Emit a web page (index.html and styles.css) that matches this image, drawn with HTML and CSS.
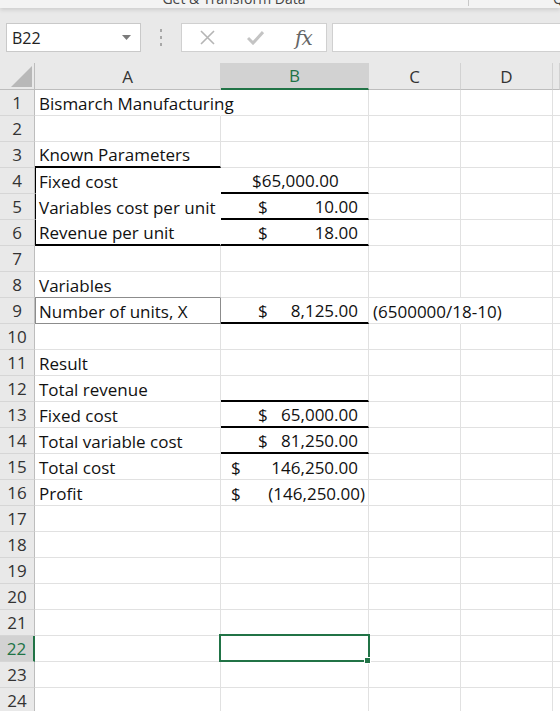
FILE: index.html
```html
<!DOCTYPE html>
<html lang="en">
<head>
    <meta charset="UTF-8">
    <meta name="viewport" content="width=device-width, initial-scale=1.0">
    <title>Break-even - Excel</title>
    <link rel="stylesheet" href="styles.css">
</head>
<body>
    <div class="ribbon">
        <span class="group-label">Get &amp; Transform Data</span>
        <span class="group-sep"></span>
        <span class="next-label">Q</span>
    </div>

    <div class="formula-bar">
        <div class="name-box">
            <span>B22</span>
            <svg width="9" height="5" viewBox="0 0 9 5"><polygon points="0,0 9,0 4.5,5" fill="#7a7a7a"/></svg>
        </div>
        <div class="grip"><i></i><i></i><i></i></div>
        <div class="fx-box">
            <svg class="cancel" width="15" height="15" viewBox="0 0 15 15"><path d="M1 1 L14 14 M14 1 L1 14" stroke="#b5b5b5" stroke-width="1.6"/></svg>
            <svg class="enter" width="17" height="15" viewBox="0 0 17 15"><path d="M1 8 L6 13 L16 2" stroke="#c4c4c4" stroke-width="3" fill="none"/></svg>
            <span class="fx">fx</span>
        </div>
        <div class="formula-input"></div>
    </div>

    <div class="sheet">
        <div class="row head">
            <div class="corner"><svg width="21" height="21" viewBox="0 0 21 21"><polygon points="21,0 21,21 0,21" fill="#b8b8b8"/></svg></div>
            <div class="ch">A</div>
            <div class="ch selected">B</div>
            <div class="ch">C</div>
            <div class="ch">D</div>
            <div class="ch"></div>
        </div>

        <div class="row">
            <div class="rh">1</div>
            <div class="c spill">Bismarch Manufacturing</div>
            <div class="c"></div><div class="c"></div><div class="c"></div><div class="c"></div>
        </div>
        <div class="row">
            <div class="rh">2</div>
            <div class="c"></div><div class="c"></div><div class="c"></div><div class="c"></div><div class="c"></div>
        </div>
        <div class="row">
            <div class="rh">3</div>
            <div class="c thick-bottom">Known Parameters</div>
            <div class="c"></div><div class="c"></div><div class="c"></div><div class="c"></div>
        </div>
        <div class="row">
            <div class="rh">4</div>
            <div class="c boxed-left no-grid">Fixed cost</div>
            <div class="c money thick-bottom">$65,000.00</div>
            <div class="c"></div><div class="c"></div><div class="c"></div>
        </div>
        <div class="row">
            <div class="rh">5</div>
            <div class="c boxed-left no-grid">Variables cost per unit</div>
            <div class="c acct thick-bottom"><span>$</span><span>10.00</span></div>
            <div class="c"></div><div class="c"></div><div class="c"></div>
        </div>
        <div class="row">
            <div class="rh">6</div>
            <div class="c boxed-left no-grid thick-bottom">Revenue per unit</div>
            <div class="c acct thick-bottom"><span>$</span><span>18.00</span></div>
            <div class="c"></div><div class="c"></div><div class="c"></div>
        </div>
        <div class="row">
            <div class="rh">7</div>
            <div class="c"></div><div class="c"></div><div class="c"></div><div class="c"></div><div class="c"></div>
        </div>
        <div class="row">
            <div class="rh">8</div>
            <div class="c box-top">Variables</div>
            <div class="c"></div><div class="c"></div><div class="c"></div><div class="c"></div>
        </div>
        <div class="row">
            <div class="rh">9</div>
            <div class="c boxed">Number of units, X</div>
            <div class="c acct thick-bottom"><span>$</span><span>8,125.00</span></div>
            <div class="c spill">(6500000/18-10)</div>
            <div class="c"></div><div class="c"></div>
        </div>
        <div class="row">
            <div class="rh">10</div>
            <div class="c"></div><div class="c"></div><div class="c"></div><div class="c"></div><div class="c"></div>
        </div>
        <div class="row">
            <div class="rh">11</div>
            <div class="c">Result</div>
            <div class="c"></div><div class="c"></div><div class="c"></div><div class="c"></div>
        </div>
        <div class="row">
            <div class="rh">12</div>
            <div class="c">Total revenue</div>
            <div class="c thick-bottom"></div>
            <div class="c"></div><div class="c"></div><div class="c"></div>
        </div>
        <div class="row">
            <div class="rh">13</div>
            <div class="c">Fixed cost</div>
            <div class="c acct tight thick-bottom"><span>$</span><span>65,000.00</span></div>
            <div class="c"></div><div class="c"></div><div class="c"></div>
        </div>
        <div class="row">
            <div class="rh">14</div>
            <div class="c">Total variable cost</div>
            <div class="c acct tight thick-bottom"><span>$</span><span>81,250.00</span></div>
            <div class="c"></div><div class="c"></div><div class="c"></div>
        </div>
        <div class="row">
            <div class="rh">15</div>
            <div class="c">Total cost</div>
            <div class="c acct wide"><span>$</span><span>146,250.00</span></div>
            <div class="c"></div><div class="c"></div><div class="c"></div>
        </div>
        <div class="row">
            <div class="rh">16</div>
            <div class="c">Profit</div>
            <div class="c acct wide negative"><span>$</span><span>(146,250.00)</span></div>
            <div class="c"></div><div class="c"></div><div class="c"></div>
        </div>
        <div class="row">
            <div class="rh">17</div>
            <div class="c"></div><div class="c"></div><div class="c"></div><div class="c"></div><div class="c"></div>
        </div>
        <div class="row">
            <div class="rh">18</div>
            <div class="c"></div><div class="c"></div><div class="c"></div><div class="c"></div><div class="c"></div>
        </div>
        <div class="row">
            <div class="rh">19</div>
            <div class="c"></div><div class="c"></div><div class="c"></div><div class="c"></div><div class="c"></div>
        </div>
        <div class="row">
            <div class="rh">20</div>
            <div class="c"></div><div class="c"></div><div class="c"></div><div class="c"></div><div class="c"></div>
        </div>
        <div class="row">
            <div class="rh">21</div>
            <div class="c"></div><div class="c"></div><div class="c"></div><div class="c"></div><div class="c"></div>
        </div>
        <div class="row">
            <div class="rh selected">22</div>
            <div class="c"></div>
            <div class="c active"></div>
            <div class="c"></div><div class="c"></div><div class="c"></div>
        </div>
        <div class="row">
            <div class="rh">23</div>
            <div class="c"></div><div class="c"></div><div class="c"></div><div class="c"></div><div class="c"></div>
        </div>
        <div class="row">
            <div class="rh">24</div>
            <div class="c"></div><div class="c"></div><div class="c"></div><div class="c"></div><div class="c"></div>
        </div>
    </div>
</body>
</html>
```

FILE: styles.css
```css
body {
    margin: 0;
    background: #e9e9e9;
    font-family: 'Open Sans', 'Noto Sans', sans-serif;
    color: #111;
    overflow: hidden;
}

/* ribbon edge */
.ribbon {
    display: grid;
    grid-template-columns: 468px 1px 1fr;
    height: 8px;
    overflow: hidden;
    background: #f3f3f3;
    box-shadow: 0 2px 4px rgba(0, 0, 0, 0.12);
    position: relative;
    z-index: 1;
}

.group-label {
    text-align: center;
    font-size: 14px;
    line-height: 14px;
    margin-top: -8px;
    color: #444;
}

.group-sep {
    height: 6px;
    background: #c8c8c8;
}

.next-label {
    text-align: right;
    font-size: 14px;
    line-height: 14px;
    margin-top: -8px;
    margin-right: -4px;
    color: #444;
}

/* formula bar */
.formula-bar {
    display: flex;
    align-items: center;
    padding: 15px 0 11px 6px;
}

.name-box {
    width: 135px;
    height: 29px;
    box-sizing: border-box;
    background: white;
    border: 1px solid #c9c9c9;
    display: flex;
    align-items: center;
    justify-content: space-between;
    padding: 0 9px 0 5px;
    font-size: 16px;
    color: #222;
}

.grip {
    display: flex;
    flex-direction: column;
    gap: 4px;
    margin: 0 19px 0 19px;
}

.grip i {
    display: block;
    width: 2px;
    height: 3px;
    background: #a8a8a8;
}

.fx-box {
    width: 146px;
    height: 29px;
    box-sizing: border-box;
    background: white;
    border: 1px solid #d0d0d0;
    display: flex;
    align-items: center;
    padding-left: 18px;
}

.fx-box .enter {
    margin-left: 32px;
}

.fx {
    margin-left: 31px;
    font-family: 'DejaVu Serif', 'Liberation Serif', serif;
    font-style: italic;
    font-size: 20px;
    color: #666;
    letter-spacing: -1px;
}

.formula-input {
    flex: 1;
    height: 29px;
    margin-left: 5px;
    margin-right: -2px;
    box-sizing: border-box;
    background: white;
    border: 1px solid #d0d0d0;
}

/* grid */
.sheet {
    background: white;
}

.row {
    display: grid;
    grid-template-columns: 35px 186px 148px 92px 92px 1fr;
    height: 26px;
}

.row.head {
    height: 27px;
    background: #e9e9e9;
}

.corner {
    display: flex;
    align-items: flex-end;
    justify-content: flex-end;
    padding: 0 2px 2px 0;
    border-right: 1px solid #bdbdbd;
    border-bottom: 1px solid #bdbdbd;
}

.ch {
    display: flex;
    align-items: center;
    justify-content: center;
    font-size: 17px;
    color: #333;
    border-right: 1px solid #d2d2d2;
    border-bottom: 1px solid #bdbdbd;
    box-sizing: border-box;
}

.ch.selected {
    background: #d2d2d2;
    color: #217346;
    border-bottom: 2px solid #217346;
}

.rh {
    display: flex;
    align-items: center;
    justify-content: center;
    background: #e9e9e9;
    font-size: 17px;
    color: #333;
    border-right: 1px solid #bdbdbd;
    border-bottom: 1px solid #d6d6d6;
    box-sizing: border-box;
}

.rh.selected {
    background: #d2d2d2;
    color: #217346;
    border-right: 2px solid #217346;
}

.c {
    display: flex;
    align-items: center;
    box-sizing: border-box;
    padding: 1px 4px 0 4px;
    border-right: 1px solid #e1e1e1;
    border-bottom: 1px solid #e1e1e1;
    font-size: 17px;
    white-space: nowrap;
}

.c.spill {
    border-right-color: white;
    overflow: visible;
    position: relative;
    z-index: 1;
}

.c.no-grid {
    border-right-color: white;
    border-bottom-color: white;
}

.c.boxed-left {
    border-left: 1px solid #000;
    padding-left: 3px;
}

.c.thick-bottom {
    border-bottom: 2px solid #000;
}

.c.box-top {
    border-bottom-color: #8c8c8c;
}

.c.boxed {
    border-left: 1px solid #8c8c8c;
    border-right: 1px solid #8c8c8c;
    border-bottom: 1px solid #8c8c8c;
    padding-left: 3px;
}

.c.money {
    padding-left: 31px;
}

.c.acct {
    justify-content: space-between;
    padding-left: 37px;
    padding-right: 10px;
}

.c.acct.wide {
    padding-left: 10px;
}

.c.acct.negative {
    padding-right: 3px;
}

.c.active {
    position: relative;
}

.c.active::before {
    content: "";
    position: absolute;
    top: -2px;
    left: -2px;
    right: -2px;
    bottom: -1px;
    border: 2px solid #217346;
}

.c.active::after {
    content: "";
    position: absolute;
    right: -3px;
    bottom: -3px;
    width: 5px;
    height: 5px;
    background: #217346;
    border: 1px solid white;
}
```
